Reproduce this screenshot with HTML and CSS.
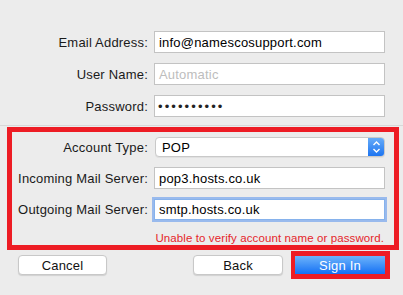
FILE: index.html
```html
<!DOCTYPE html>
<html>
<head>
<meta charset="utf-8">
<link rel="stylesheet" href="styles.css">
</head>
<body>
<div class="window">
  <div class="grid top">
    <label class="lbl">Email Address:</label>
    <div class="field">info@namescosupport.com</div>
    <label class="lbl">User Name:</label>
    <div class="field placeholder">Automatic</div>
    <label class="lbl">Password:</label>
    <div class="field dots">••••••••••</div>
  </div>
  <div class="sep"></div>
  <div class="redbox">
    <div class="grid inner">
      <label class="lbl">Account Type:</label>
      <div class="popup">
        <span class="popup-text">POP</span>
        <span class="popup-arrows">
          <svg width="9" height="14" viewBox="0 0 9 14"><path d="M1.5 5 L4.5 2 L7.5 5 M1.5 9 L4.5 12 L7.5 9" fill="none" stroke="#fff" stroke-width="1.4"/></svg>
        </span>
      </div>
      <label class="lbl">Incoming Mail Server:</label>
      <div class="field f-in">pop3.hosts.co.uk</div>
      <label class="lbl">Outgoing Mail Server:</label>
      <div class="field focus">smtp.hosts.co.uk</div>
    </div>
    <div class="error">Unable to verify account name or password.</div>
  </div>
  <div class="buttons">
    <button class="btn cancel">Cancel</button>
    <button class="btn back">Back</button>
    <div class="signin-frame"><button class="btn primary">Sign In</button></div>
  </div>
</div>
</body>
</html>
```
FILE: styles.css
```css
html, body {
  margin: 0;
  padding: 0;
  background: #ececec;
}
body {
  width: 403px;
  height: 295px;
  overflow: hidden;
  font-family: "Liberation Sans", Arial, sans-serif;
  font-size: 13px;
  letter-spacing: 0.2px;
  color: #000;
}
.window {
  padding-top: 31px;
}
.grid {
  display: grid;
  align-items: center;
  column-gap: 6px;
}
.top {
  grid-template-columns: 148px 231px;
  row-gap: 10px;
}
.top .field {
  height: 22px;
}
.lbl {
  text-align: right;
  white-space: nowrap;
  color: #1a1a1a;
}
.field {
  box-sizing: border-box;
  background: #fff;
  border: 1px solid #c3c3c3;
  padding: 0 0 0 4px;
  display: flex;
  align-items: center;
  white-space: nowrap;
  overflow: hidden;
}
.placeholder {
  color: #bdbdbd;
}
.dots {
  font-size: 13px;
  letter-spacing: 2.1px;
  color: #222;
  padding-left: 3px;
}
.sep {
  height: 1px;
  background: #d8d8d8;
  margin-top: 8px;
  margin-bottom: 1px;
}
.redbox {
  margin: 0 4px 0 7px;
  border: 5px solid #ed1c24;
  padding-top: 5px;
}
.inner {
  grid-template-columns: 136px 231px;
  row-gap: 10px;
}
.popup {
  box-sizing: border-box;
  height: 20px;
  margin-left: 1px;
  background: #fff;
  border: 1px solid #c9c9c9;
  border-radius: 4px;
  display: flex;
  align-items: stretch;
  overflow: hidden;
  box-shadow: 0 1px 0 rgba(0,0,0,0.05);
}
.popup-text {
  flex: 1;
  padding-left: 6px;
  display: flex;
  align-items: center;
}
.popup-arrows {
  width: 17px;
  margin: -1px -1px -1px 0;
  background: linear-gradient(#6aaef9, #1a72f0);
  border-radius: 0 4px 4px 0;
  display: flex;
  align-items: center;
  justify-content: center;
}
.f-in {
  height: 22px;
}
.focus {
  height: 21px;
  border-color: #86b2ec;
  box-shadow: 0 0 0 2px rgba(125, 170, 238, 0.75);
}
.error {
  margin-top: 12px;
  padding-right: 10px;
  text-align: right;
  font-size: 11.5px;
  letter-spacing: 0.1px;
  line-height: 13px;
  color: #e5252a;
  white-space: nowrap;
}
.buttons {
  display: flex;
  align-items: flex-start;
  padding-left: 18px;
  margin-top: 1px;
}
.btn {
  box-sizing: border-box;
  font-family: "Liberation Sans", Arial, sans-serif;
  font-size: 13px;
  letter-spacing: 0.2px;
  height: 20px;
  padding: 0;
  background: #fff;
  border: 1px solid #c8c8c8;
  border-radius: 4px;
  color: #111;
  box-shadow: 0 1px 1px rgba(0,0,0,0.12);
}
.cancel {
  width: 89px;
  margin-top: 4px;
}
.back {
  width: 90px;
  margin-top: 4px;
  margin-left: 86px;
}
.signin-frame {
  margin-left: 8px;
  border-style: solid;
  border-color: #ed1c24;
  border-width: 5px 5px 5px 4px;
  display: flex;
}
.primary {
  width: 90px;
  height: 18px;
  border: none;
  border-radius: 0;
  background: linear-gradient(#6db4fb, #1470f4);
  color: #fff;
  box-shadow: none;
}
```
